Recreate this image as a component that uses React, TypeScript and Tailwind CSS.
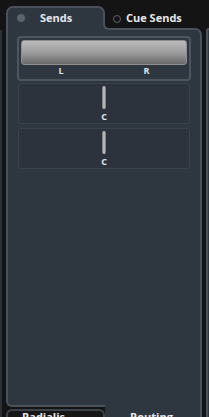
const FONT = { fontFamily: '"Open Sans", "Liberation Sans", sans-serif' };

function MonoSend() {
  return (
    <div className="mx-[10px] flex h-[41px] flex-col items-center rounded-[3px] border border-[#3a424b] bg-[#2c333c]">
      <div className="mt-[2px] h-[23px] w-[4px] rounded-full bg-linear-to-r from-[#6e6e6e] via-[#d0d0d0] to-[#6e6e6e]" />
      <span className="mt-[2px] text-[9px] font-bold leading-[12px] text-[#dfe6ee]">C</span>
    </div>
  );
}

export default function App() {
  return (
    <div className="flex h-[417px] w-[209px] overflow-hidden bg-[#141414]" style={FONT}>
      {/* left neighbour edge */}
      <div className="flex w-[6px] flex-col">
        <div className="h-[30px]" />
        <div className="w-[2px] flex-1 bg-[#2a3038]" />
      </div>

      <div className="flex h-[417px] w-[196px] flex-col">
        <div className="h-[6px] shrink-0" />
        {/* tabs */}
        <div className="flex h-[22px] shrink-0">
          <div className="relative z-10 -mb-[2px] h-[24px] w-[99px] rounded-t-[7px] border-2 border-b-0 border-[#4a525c] bg-[#2e3640]">
            <div className="flex h-[20px] items-center pl-[9px]">
              <span className="h-[8px] w-[8px] rounded-full bg-[#5b636d]" />
              <span className="ml-[15px] text-[11px] font-bold text-[#e4e8ee]">Sends</span>
            </div>
          </div>
          {/* tab foot curve */}
          <div className="relative z-20 -mb-[2px] -ml-[2px] h-[14px] w-[8px] self-end bg-[#2e3640]">
            <div className="h-full w-full rounded-bl-[6px] border-b-2 border-l-2 border-[#4a525c] bg-[#141414]" />
          </div>
          <div className="flex h-[22px] items-center pl-[2px] pt-[3px]">
            <span className="h-[8px] w-[8px] rounded-full border border-[#5c6168]" />
            <span className="ml-[5px] text-[11px] font-bold text-[#e8e8e8]">Cue Sends</span>
          </div>
        </div>

        {/* panel */}
        <div className="flex h-[372px] shrink-0 flex-col rounded-tr-[7px] border-x-2 border-t-2 border-[#4a525c] bg-[#2e3640]">
          <div className="mx-[9px] mt-[6px] h-[45px] rounded-[4px] border-2 border-[#4d5660] p-[2px]">
            <div className="h-[25px] rounded-[3px] border border-[#8e8e8e] bg-linear-to-b from-[#bababa] via-[#9d9d9d] to-[#6a6a6a]" />
            <div className="flex justify-center gap-[80px] text-[9px] font-bold leading-[12px] text-[#dfe6ee]">
              <span>L</span>
              <span>R</span>
            </div>
          </div>
          <div className="mt-[2px]">
            <MonoSend />
          </div>
          <div className="mt-[4px]">
            <MonoSend />
          </div>
        </div>

        {/* bottom tabs */}
        <div className="flex h-[17px] shrink-0 overflow-hidden">
          <div className="flex h-[17px] w-[99px] flex-col">
            <div className="h-[7px] shrink-0 rounded-bl-[6px] border-b-2 border-l-2 border-[#4a525c] bg-[#2e3640]" />
            <div className="h-[2px] shrink-0" />
            <div className="h-[8px] shrink-0 overflow-hidden rounded-t-[6px] border-x-2 border-t-2 border-[#3c434b] bg-[#161616] pl-[14px]">
              <span className="block whitespace-nowrap text-[11px] font-bold leading-[11px] text-[#e8e8e8]">Radialis</span>
            </div>
          </div>
          <div className="h-[17px] flex-1 overflow-hidden border-r-2 border-[#4a525c] bg-[#2e3640] pl-[25px] pt-[11px]">
            <span className="block whitespace-nowrap text-[11px] font-bold leading-[11px] text-[#e8e8e8]">Routing</span>
          </div>
        </div>
      </div>

      {/* right neighbour edge */}
      <div className="w-[4px]" />
      <div className="flex w-[3px] flex-col">
        <div className="h-[28px]" />
        <div className="flex-1 rounded-tl-[5px] border-l-2 border-t-2 border-[#4a525c] bg-[#2e3640]" />
      </div>
    </div>
  );
}
